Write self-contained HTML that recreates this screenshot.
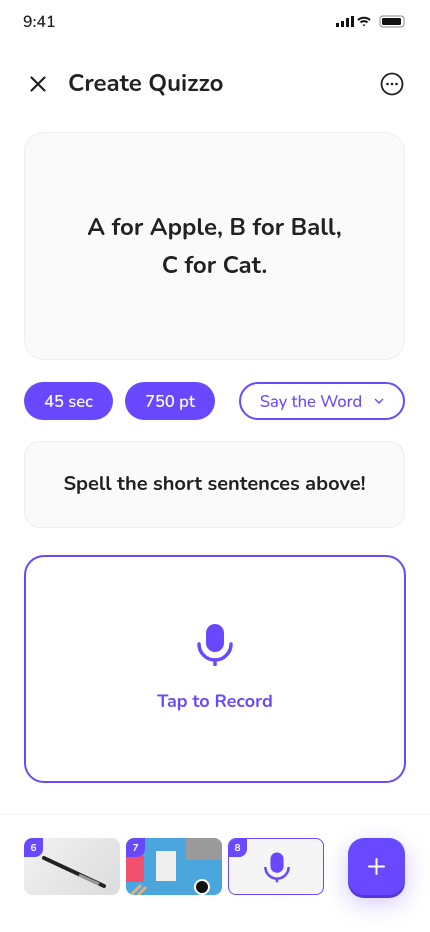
<!DOCTYPE html>
<html><head><style>
*{margin:0;padding:0;box-sizing:border-box}
body{width:430px;height:932px;background:#fff;font-family:"Nunito","Liberation Sans",sans-serif;color:#212121;position:relative;overflow:hidden}
.a{position:absolute}
.chip{position:absolute;top:382px;height:38px;border-radius:19px;background:#6949FF;color:#fff;font-size:16.5px;font-weight:600;display:flex;align-items:center;justify-content:center}
.th{position:absolute;top:838px;width:96px;height:57px;border-radius:8px;overflow:hidden}
.badge{position:absolute;left:0;top:0;width:19px;height:19px;background:#6949FF;color:#fff;font-size:10px;font-weight:700;border-radius:8px 0 8px 0;display:flex;align-items:center;justify-content:center}
</style></head><body>
<div class="a" style="left:23px;top:11px;font-size:16px;font-weight:600">9:41</div>
<svg class="a" style="left:336px;top:15px" width="70" height="13" viewBox="0 0 70 13">
<rect x="0" y="8" width="3" height="4" fill="#111"/><rect x="5" y="6" width="3" height="6" fill="#111"/><rect x="10" y="3" width="3" height="9" fill="#111"/><rect x="15" y="1" width="3" height="11" fill="#111"/>
<path d="M22 5a9 9 0 0 1 12 0M24.5 7.5a5 5 0 0 1 7 0" stroke="#111" stroke-width="2" fill="none"/><path d="M26.5 9.5l1.5 2 1.5-2z" fill="#111"/>
<rect x="44" y="1" width="24" height="11" rx="3" stroke="#888" fill="none"/><rect x="46" y="3" width="19" height="7" rx="1.5" fill="#111"/></svg>
<svg class="a" style="left:30px;top:76px" width="16" height="16" viewBox="0 0 16 16"><path d="M1.5 1.5L14.5 14.5M14.5 1.5L1.5 14.5" stroke="#212121" stroke-width="2.2" stroke-linecap="round"/></svg>
<div class="a" style="left:68px;top:68px;font-size:24px;font-weight:700">Create Quizzo</div>
<svg class="a" style="left:380px;top:72px" width="24" height="24" viewBox="0 0 24 24"><circle cx="12" cy="12" r="10.5" stroke="#212121" stroke-width="1.8" fill="none"/><circle cx="7.5" cy="12" r="1.3" fill="#212121"/><circle cx="12" cy="12" r="1.3" fill="#212121"/><circle cx="16.5" cy="12" r="1.3" fill="#212121"/></svg>
<div class="a" style="left:24px;top:132px;width:381px;height:228px;background:#FAFAFA;border:1px solid #EEEEEE;border-radius:20px;display:flex;align-items:center;justify-content:center;text-align:center;font-size:24px;font-weight:700;line-height:38px;padding-top:2px">A for Apple, B for Ball,<br>C for Cat.</div>
<div class="chip" style="left:24px;width:89px">45 sec</div>
<div class="chip" style="left:125px;width:90px">750 pt</div>
<div class="chip" style="left:239px;width:166px;background:#fff;border:2px solid #6949FF;color:#6949FF;font-weight:500">Say the Word <svg style="margin-left:12px" width="10" height="6" viewBox="0 0 10 6"><path d="M1 1l4 4 4-4" stroke="#6949FF" stroke-width="1.4" fill="none"/></svg></div>
<div class="a" style="left:24px;top:441px;width:381px;height:87px;background:#FAFAFA;border:1px solid #EEEEEE;border-radius:16px;display:flex;align-items:center;justify-content:center;font-size:20px;font-weight:700">Spell the short sentences above!</div>
<div class="a" style="left:24px;top:555px;width:382px;height:228px;border:2px solid #6949FF;border-radius:20px"></div>
<svg class="a" style="left:196px;top:622px" width="38" height="44" viewBox="0 0 38 44"><rect x="10" y="2" width="18" height="28" rx="9" fill="#6949FF"/><path d="M3 22a16 16 0 0 0 32 0" stroke="#6949FF" stroke-width="3.5" fill="none" stroke-linecap="round"/><path d="M19 38v5" stroke="#6949FF" stroke-width="3.5" stroke-linecap="round"/></svg>
<div class="a" style="left:0;width:430px;top:690px;text-align:center;font-size:18px;font-weight:700;color:#6949FF">Tap to Record</div>
<div class="a" style="left:0;top:814px;width:430px;height:1px;background:#F0F0F0"></div>
<div class="th" style="left:24px;background:linear-gradient(135deg,#f2f2f2,#dcdcdc)"><svg width="96" height="57"><path d="M20 20L80 48" stroke="#222" stroke-width="4" stroke-linecap="round"/><path d="M55 37L75 46" stroke="#999" stroke-width="3"/></svg><div class="badge">6</div></div>
<div class="th" style="left:126px;background:#4AA6DC"><svg width="96" height="57"><rect x="60" y="0" width="36" height="22" fill="#9a9a9a"/><rect x="0" y="18" width="18" height="26" fill="#F0506E"/><rect x="30" y="13" width="20" height="30" fill="#eee"/><circle cx="76" cy="49" r="8" fill="#fff"/><circle cx="76" cy="49" r="6" fill="#111"/><path d="M5 57l10-10M12 57l8-8" stroke="#e0b080" stroke-width="3"/></svg><div class="badge">7</div></div>
<div class="th" style="left:228px;background:#F5F5F5;border:1.5px solid #6949FF"><svg class="a" style="left:34px;top:12px" width="28" height="32" viewBox="0 0 38 44"><rect x="10" y="2" width="18" height="28" rx="9" fill="#6949FF"/><path d="M3 22a16 16 0 0 0 32 0" stroke="#6949FF" stroke-width="3.5" fill="none"/><path d="M19 38v5" stroke="#6949FF" stroke-width="3.5"/></svg><div class="badge" style="left:-1px;top:-1px">8</div></div>
<div class="a" style="left:348px;top:838px;width:57px;height:57px;border-radius:16px;background:#6949FF;box-shadow:0 3px 0 #5236d6,0 8px 24px rgba(105,73,255,.3)"><svg class="a" style="left:19px;top:19px" width="19" height="19"><path d="M9.5 2v15M2 9.5h15" stroke="#fff" stroke-width="2" stroke-linecap="round"/></svg></div>
</body></html>
